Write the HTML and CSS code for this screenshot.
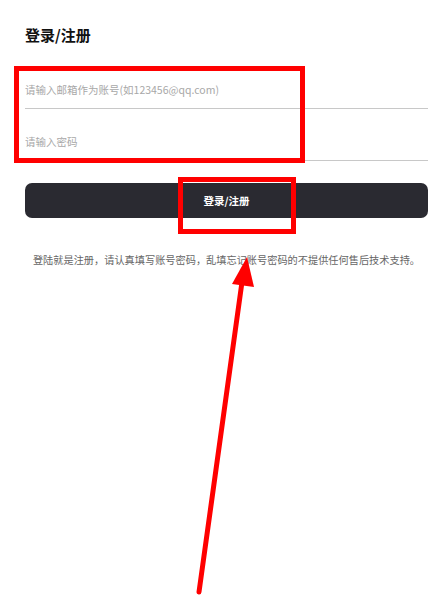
FILE: index.html
```html
<!DOCTYPE html>
<html lang="zh-CN">

<head>
  <meta charset="UTF-8">
  <meta name="viewport" content="width=device-width, initial-scale=1.0">
  <title>登录/注册</title>
  <link rel="stylesheet" href="styles.css">
</head>

<body>
  <div class="page">
    <h1 class="title">登录/注册</h1>
    <form class="loginForm">
      <label class="field">
        <input type="text" placeholder="请输入邮箱作为账号(如123456@qq.com)">
      </label>
      <label class="field">
        <input type="password" placeholder="请输入密码">
      </label>
      <button type="button" class="submitBtn">登录/注册</button>
    </form>
    <p class="notice">登陆就是注册，请认真填写账号密码，乱填忘记账号密码的不提供任何售后技术支持。</p>
  </div>

  <!-- annotation overlay -->
  <div class="mark mark1"></div>
  <div class="mark mark2"></div>
  <svg class="arrow" width="443" height="600" viewBox="0 0 443 600">
    <line x1="199" y1="592" x2="242" y2="282" stroke="#f00" stroke-width="5" stroke-linecap="round" />
    <polygon points="247,257 232,284 254,287" fill="#f00" />
  </svg>
</body>

</html>
```

FILE: styles.css
```css
html,
body {
  margin: 0;
  height: 100%;
  background: #fff;
  font-family: "Noto Sans CJK SC", "Noto Sans", sans-serif;
  overflow: hidden;
}

.page {
  padding: 25px 15px 0 25px;
}

.title {
  margin: 0 0 12px;
  font-size: 15px;
  line-height: 20px;
  font-weight: bold;
  color: #111;
}

.loginForm {
  display: flex;
  flex-direction: column;
}

.field {
  display: flex;
  align-items: flex-end;
  height: 52px;
  border-bottom: 1px solid #c8c8c8;
  box-sizing: border-box;
  padding-bottom: 10px;
}

.field input {
  width: 100%;
  border: none;
  outline: none;
  padding: 0;
  font-family: inherit;
  font-size: 10.5px;
  line-height: 16px;
  color: #333;
  background: transparent;
}

.field input::placeholder {
  color: #a8a8a8;
}

.submitBtn {
  margin-top: 22px;
  height: 35px;
  border: none;
  border-radius: 7px;
  background: #2a2a31;
  color: #fff;
  font-family: inherit;
  font-size: 10.5px;
  font-weight: bold;
}

.notice {
  margin: 35px 0 0;
  font-size: 10.2px;
  line-height: 14px;
  color: #666;
  text-align: center;
  white-space: nowrap;
}

.mark {
  position: absolute;
  border: 5px solid #f00;
  box-sizing: border-box;
}

.mark1 {
  left: 14px;
  top: 66px;
  width: 291px;
  height: 97px;
}

.mark2 {
  left: 178px;
  top: 177px;
  width: 118px;
  height: 57px;
}

.arrow {
  position: absolute;
  left: 0;
  top: 0;
  pointer-events: none;
}
```
